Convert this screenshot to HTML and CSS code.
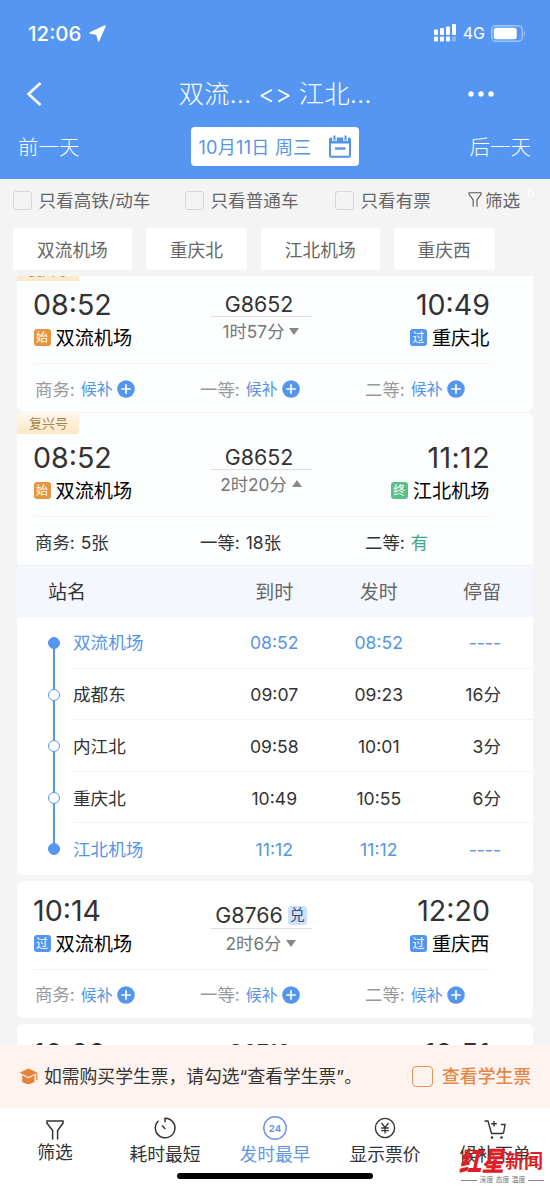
FILE: index.html
```html
<!DOCTYPE html>
<html lang="zh-CN">
<head>
<meta charset="utf-8">
<title>车票查询</title>
<link rel="stylesheet" href="styles.css">
</head>
<body>
<svg class="defs" width="0" height="0">
  <symbol id="funnel" viewBox="0 0 18 20"><path d="M6.600 19.500V10.500L1 3.200V1H17V3.200L11.600 10.500V19.500" fill="none" stroke="currentColor" stroke-width="1.500"/></symbol>
  <symbol id="plus" viewBox="0 0 18 18"><circle cx="9" cy="9" r="8.800" fill="#5495ef"/><path d="M9 4.200V13.800M4.200 9H13.800" stroke="#fff" stroke-width="1.700"/></symbol>
</svg>
<div class="screen">
  <header class="header">
    <div class="status">
      <span class="clock">12:06</span>
      <svg class="loc" viewBox="0 0 17 17"><path d="M16 1L1.200 8L8 9.200L9.600 15.800Z" fill="#fff" stroke="#fff" stroke-width="1.600" stroke-linejoin="round"/></svg>
      <svg class="signal" viewBox="0 0 23 18"><g fill="#fff"><rect x="0" y="5.500" width="4" height="5.500" rx="1"/><rect x="6" y="4" width="4" height="7" rx="1"/><rect x="12" y="2.500" width="4" height="8.500" rx="1"/><rect x="18" y="0" width="4" height="11" rx="1"/><rect x="0" y="12.500" width="4" height="5" rx="1"/><rect x="6" y="12.500" width="4" height="5" rx="1"/><rect x="12" y="12.500" width="4" height="5" rx="1"/><rect x="18" y="12.500" width="4" height="5" rx="1" opacity=".3"/></g></svg>
      <span class="net">4G</span>
      <svg class="battery" viewBox="0 0 36 17"><rect x=".7" y=".7" width="30.600" height="15.600" rx="4" fill="none" stroke="#a3c6fa" stroke-width="1.400"/><rect x="2.700" y="2.700" width="23" height="11.600" rx="2.500" fill="#fff"/><path d="M33 5.500Q35.500 8.500 33 11.500Z" fill="#a3c6fa"/></svg>
    </div>
    <div class="nav">
      <svg class="back" viewBox="0 0 16 24"><path d="M14.500 1L2.500 12L14.500 23" fill="none" stroke="#fff" stroke-width="2.600"/></svg>
      <h1 class="title">双流... &lt;&gt; 江北...</h1>
      <svg class="more" viewBox="0 0 26 6"><g fill="#fff"><circle cx="3" cy="3" r="2.700"/><circle cx="13" cy="3" r="2.700"/><circle cx="23" cy="3" r="2.700"/></g></svg>
    </div>
    <div class="days">
      <span>前一天</span>
      <div class="date"><span>10月11日 周三</span>
        <svg class="cal" viewBox="0 0 22 23"><rect x="1" y="3.500" width="20" height="18.300" rx="1" fill="none" stroke="#5595e8" stroke-width="2"/><path d="M1 3H21V8.500H1Z" fill="#5595e8"/><path d="M5.500 0V6M16.500 0V6" stroke="#fff" stroke-width="4.500"/><path d="M5.500 .5V5.500M16.500 .5V5.500" stroke="#5595e8" stroke-width="2"/><path d="M6 13.500H16.500" stroke="#5595e8" stroke-width="2.400"/></svg>
      </div>
      <span>后一天</span>
    </div>
  </header>

  <div class="filters">
    <label class="opt"><i class="box"></i>只看高铁/动车</label>
    <label class="opt"><i class="box"></i>只看普通车</label>
    <label class="opt"><i class="box"></i>只看有票</label>
    <span class="sift"><svg class="sift-icon"><use href="#funnel"/></svg>筛选<sup class="count">0</sup></span>
  </div>
  <div class="chips"><span class="chip">双流机场</span><span class="chip">重庆北</span><span class="chip">江北机场</span><span class="chip">重庆西</span></div>

  <main class="list">
    <article class="card tagged first">
      <span class="tag">复兴号</span>
      <div class="trip">
        <div class="end"><b class="time">08:52</b><span class="place"><i class="badge start">始</i>双流机场</span></div>
        <div class="mid"><b class="no">G8652</b><span class="dur">1时57分<i class="tri"></i></span></div>
        <div class="end right"><b class="time">10:49</b><span class="place"><i class="badge pass">过</i>重庆北</span></div>
      </div>
      <div class="seats dim">
        <span class="seat">商务:<em>候补</em><svg class="plus"><use href="#plus"/></svg></span>
        <span class="seat">一等:<em>候补</em><svg class="plus"><use href="#plus"/></svg></span>
        <span class="seat">二等:<em>候补</em><svg class="plus"><use href="#plus"/></svg></span>
      </div>
    </article>

    <article class="card tagged open">
      <span class="tag">复兴号</span>
      <div class="trip">
        <div class="end"><b class="time">08:52</b><span class="place"><i class="badge start">始</i>双流机场</span></div>
        <div class="mid"><b class="no">G8652</b><span class="dur">2时20分<i class="tri up"></i></span></div>
        <div class="end right"><b class="time wide">11:12</b><span class="place"><i class="badge last">终</i>江北机场</span></div>
      </div>
      <div class="seats">
        <span class="seat">商务:<span class="left">5张</span></span>
        <span class="seat">一等:<span class="left">18张</span></span>
        <span class="seat">二等:<span class="left has">有</span></span>
      </div>
      <div class="stops">
        <div class="row head"><span class="name">站名</span><span>到时</span><span>发时</span><span class="stay">停留</span></div>
        <div class="row edge"><i class="dot"></i><span class="name">双流机场</span><span>08:52</span><span>08:52</span><span class="stay">----</span></div>
        <div class="row via"><i class="dot"></i><span class="name">成都东</span><span>09:07</span><span>09:23</span><span class="stay">16分</span></div>
        <div class="row via"><i class="dot"></i><span class="name">内江北</span><span>09:58</span><span>10:01</span><span class="stay">3分</span></div>
        <div class="row via"><i class="dot"></i><span class="name">重庆北</span><span>10:49</span><span>10:55</span><span class="stay">6分</span></div>
        <div class="row edge finish"><i class="dot"></i><span class="name">江北机场</span><span>11:12</span><span>11:12</span><span class="stay">----</span></div>
      </div>
    </article>

    <article class="card plain">
      <div class="trip">
        <div class="end"><b class="time">10:14</b><span class="place"><i class="badge pass">过</i>双流机场</span></div>
        <div class="mid"><b class="no">G8766<i class="swap">兑</i></b><span class="dur">2时6分<i class="tri"></i></span></div>
        <div class="end right"><b class="time">12:20</b><span class="place"><i class="badge pass">过</i>重庆西</span></div>
      </div>
      <div class="seats dim">
        <span class="seat">商务:<em>候补</em><svg class="plus"><use href="#plus"/></svg></span>
        <span class="seat">一等:<em>候补</em><svg class="plus"><use href="#plus"/></svg></span>
        <span class="seat">二等:<em>候补</em><svg class="plus"><use href="#plus"/></svg></span>
      </div>
    </article>

    <article class="card next">
      <div class="trip">
        <div class="end"><b class="time">10:22</b></div>
        <div class="mid"><b class="no">G8712</b></div>
        <div class="end right"><b class="time">12:51</b></div>
      </div>
    </article>
  </main>

  <div class="notice">
    <svg class="cap" viewBox="0 0 19 17"><path d="M9.500 .5L18.500 4.800L9.500 9.100L.5 4.800Z" fill="#e58338"/><path d="M3.200 7.300L9.500 10.300L15.500 7.300V14Q9.500 18.300 3.200 14Z" fill="#e58338"/><path d="M17.700 5V12" stroke="#e58338" stroke-width="1.200"/></svg>
    <span class="tip">如需购买学生票，请勾选“查看学生票”。</span>
    <i class="student-box"></i>
    <span class="student">查看学生票</span>
  </div>

  <footer class="tabs">
    <div class="tab"><svg class="ico funnel"><use href="#funnel"/></svg>筛选</div>
    <div class="tab"><svg class="ico" viewBox="0 0 24 24"><path d="M12 6.200V2.200A9.800 9.800 0 1 1 5.600 4.700" fill="none" stroke="#333" stroke-width="1.500"/><path d="M9 9.500L12.300 13" stroke="#333" stroke-width="1.600"/></svg>耗时最短</div>
    <div class="tab on"><svg class="ico" viewBox="0 0 24 24"><circle cx="12" cy="12" r="11.200" fill="none" stroke="#6b94e6" stroke-width="1.400"/><text class="n24" x="12" y="15.500" text-anchor="middle">24</text></svg>发时最早</div>
    <div class="tab"><svg class="ico" viewBox="0 0 24 24"><circle cx="12" cy="12" r="9.600" fill="none" stroke="#333" stroke-width="1.400"/><path d="M8.500 7L12 11.500L15.500 7M12 11.500V17.500M8.200 12H15.800M8.200 14.700H15.800" fill="none" stroke="#333" stroke-width="1.300"/></svg>显示票价</div>
    <div class="tab"><svg class="ico" viewBox="0 0 24 24"><path d="M1.500 5H5L8.500 17.500H19Q20.500 17.500 20.800 16L22 8.500H18M11 5V10.500M8.200 7.800H13.800" fill="none" stroke="#333" stroke-width="1.400"/><circle cx="9" cy="21.500" r="1.300" fill="#333"/><circle cx="18.500" cy="21.500" r="1.300" fill="#333"/></svg>候补下单</div>
    <i class="home"></i>
    <div class="mark">
      <div class="brand"><span class="brush">红星</span><span class="news">新闻</span></div>
      <div class="motto"><span>深度 态度 温度</span></div>
    </div>
  </footer>
</div>
</body>
</html>
```
FILE: styles.css
```css
* { box-sizing: border-box; }
body { margin: 0; background: #f4f4f4; font-family: Inter, "Noto Sans CJK SC", sans-serif; color: #333; }
i, em { font-style: normal; }
b { font-weight: 400; }
svg { flex: none; display: block; }
.defs { position: absolute; }
.screen { width: 550px; height: 1190px; display: flex; flex-direction: column; overflow: hidden; white-space: nowrap; }

/* header */
.header { height: 179px; flex: none; background: #5596f3; color: #fff; }
.status { height: 66px; padding: 0 23px 0 28px; display: flex; align-items: center; }
.clock { font-size: 20.5px; font-weight: 500; }
.loc { width: 17px; height: 17px; margin-left: 7px; }
.signal { width: 23px; height: 18px; margin-left: auto; }
.net { font-size: 16px; margin: 0 6px; }
.battery { width: 36px; height: 17px; }
.nav { height: 56px; display: grid; grid-template-columns: 1fr auto 1fr; align-items: center; padding: 0 56px 0 26px; }
.back { width: 16px; height: 24px; }
.title { margin: 0 -15px 0 15px; font-size: 25.5px; font-weight: 300; line-height: 38px; }
.more { width: 26px; height: 6px; justify-self: end; }
.days { height: 49px; display: flex; align-items: center; justify-content: space-between; padding: 0 19px 0 18px; font-size: 20.5px; font-weight: 300; }
.days > span { padding-bottom: 2px; }
.date { width: 168px; height: 39px; border-radius: 4px; background: #fff; color: #5595e8; font-size: 18px; font-weight: 400; display: flex; align-items: center; justify-content: space-between; padding: 0 8px; }
.date span { padding-bottom: 2px; letter-spacing: .3px; }
.cal { width: 22px; height: 23px; }

/* filters */
.filters { height: 42px; flex: none; display: grid; grid-template-columns: 172px 150px 133px auto; padding: 0 0 2px 13px; align-items: center; font-size: 17.6px; color: #666; }
.opt { display: flex; align-items: center; gap: 6.5px; }
.box { width: 19px; height: 19px; margin-top: 2px; border: 1.5px solid #d8d8d8; border-radius: 3px; }
.sift { display: flex; align-items: center; gap: 3px; }
.sift-icon { width: 14px; height: 15px; color: #555; }
.count { color: #fff; font-size: 11px; align-self: flex-start; margin: -1px 0 0 4px; }
.chips { height: 55px; flex: none; display: flex; gap: 14px; padding: 7px 13px 0; }
.chip { height: 42px; line-height: 45px; padding: 0 24px; background: #fff; border-radius: 3px; font-size: 17.7px; color: #666; }

/* results */
.list { height: 769px; flex: none; overflow: hidden; padding: 0 17px; }
.card { background: #fff; border-radius: 6px; height: 137px; margin-bottom: 6px; overflow: hidden; }
.card.tagged { background: #fcfdff; height: 152px; margin-bottom: 1px; padding-top: 1px; }
.card.first { margin-top: -16px; }
.card.open { height: 462px; margin-bottom: 6px; }
.tag { display: block; width: 62px; height: 20px; margin-bottom: -6px; padding-left: 12px; line-height: 19px; font-size: 13px; color: #a68350; background: linear-gradient(#fff5e8, #fce8c8); }
.trip { height: 89px; padding: 15px 0 0; margin: 0 43px 0 17px; display: grid; grid-template-columns: 1fr 101px 1fr; border-bottom: 1px solid #f3f3f3; }
.end { display: flex; flex-direction: column; }
.right { align-items: flex-end; }
.time { height: 31px; line-height: 30px; font-size: 28.6px; margin: 0 0 0 -1px; }
.time.wide { letter-spacing: .4px; }
.place { height: 32px; display: flex; align-items: center; gap: 5px; font-size: 19.2px; color: #000; }
.end:not(.right) .place { margin-left: -.5px; }
.right .place { margin-right: .5px; }
.badge { width: 17px; height: 17px; margin-top: 1px; border-radius: 3px; color: #fff; font-size: 12px; line-height: 17px; text-align: center; }
.start { background: #e69440; }
.pass { background: #5495ef; }
.last { background: #5bbf88; }
.mid { text-align: center; display: flex; flex-direction: column; margin: 0 1px 0 -1px; }
.no { height: 27px; line-height: 26px; padding: 2px 4px 0 0; font-size: 21.4px; border-bottom: 1px solid #dfdfdf; display: flex; justify-content: center; align-items: center; gap: 5px; }
.plain .mid { padding-top: 6px; }
.plain .no { padding: 0; }
.next .no { padding-top: 0; }
.swap { width: 19px; height: 19px; border-radius: 3px; background: #cfe1f8; color: #35507a; font-size: 15px; line-height: 18px; text-align: center; }
.dur { height: 26px; display: flex; align-items: center; justify-content: center; gap: 5px; font-size: 17.3px; color: #777; }
.tri { margin-top: 3px; border: 5.5px solid transparent; border-top: 7px solid #888; border-bottom: 0; }
.tri.up { margin-top: 0; border-top: 0; border-bottom: 7px solid #888; }
.seats { height: 48px; margin-left: 18px; display: grid; grid-template-columns: repeat(3, 165px); align-items: center; font-size: 17.4px; }
.seats.dim { color: #999; }
.seat { display: flex; align-items: center; }
.seat em { margin-left: 6px; color: #5595e8; font-size: 16px; }
.left { margin-left: 6px; }
.has { color: #3fa67c; }
.plus { width: 18px; height: 18px; margin: 2px 0 0 4px; }
.plain .seats { padding-bottom: 1px; }

/* stop table */
.stops { background: #fff; }
.row { position: relative; height: 51.6px; margin-left: 56px; padding-right: 32px; display: grid; grid-template-columns: 149px 104.5px 104.5px 1fr; align-items: center; text-align: center; font-size: 17.6px; border-bottom: 1px solid #f4f4f4; }
.name { text-align: left; }
.row:not(.head) .name, .via .stay { padding-bottom: 2px; }
.via { padding-top: 2px; }
.stay { text-align: right; }
.row.head { height: 52px; margin: 0; padding: 0 32px 2px 31px; grid-template-columns: 174px 104.5px 104.5px 1fr; background: #f4f8fe; font-size: 19px; color: #666; border: 0; border-top: 1px solid #eef1f7; }
.head .name { color: #333; }
.edge { color: #5595e8; }
.finish { border: 0; }
.dot { position: absolute; left: -25px; top: 20px; width: 12px; height: 12px; border-radius: 50%; border: 1.5px solid #5596f3; background: #fff; z-index: 1; }
.edge .dot { background: #5596f3; }
.row:not(.head):not(.finish)::before { content: ""; position: absolute; left: -20px; top: 26px; width: 2px; height: 52px; background: #5596e8; }

/* student notice */
.notice { height: 63px; flex: none; background: #fef3ee; display: flex; align-items: center; padding: 0 19px; }
.cap { width: 19px; height: 17px; }
.tip { margin-left: 6px; padding-bottom: 3px; font-size: 17.8px; }
.student-box { width: 21px; height: 21px; margin-left: auto; border: 1.5px solid #e39258; border-radius: 4px; }
.student { margin-left: 9px; padding-bottom: 3px; font-size: 17.8px; font-weight: 500; color: #e28745; }

/* tab bar */
.tabs { position: relative; height: 82px; flex: none; background: #fff; display: grid; grid-template-columns: repeat(5, 110px); }
.tab { display: flex; flex-direction: column; align-items: center; padding-top: 8px; font-size: 17.8px; line-height: 26px; }
.ico { width: 24px; height: 24px; margin-bottom: 2px; color: #333; }
.funnel { width: 18px; height: 20px; margin: 4px 0 0; }
.on { color: #5f97e8; }
.n24 { font: 700 9.5px Inter, sans-serif; fill: #6b94e6; }
.home { position: absolute; left: 177px; bottom: 11px; width: 196px; height: 6px; border-radius: 3px; background: #000; }
.mark { position: absolute; left: 461px; top: 38px; width: 83px; }
.brand { height: 30px; display: flex; align-items: center; color: #dc1f26; font-weight: 900; }
.brush { width: 44px; font-size: 22.5px; line-height: 30px; transform: skewX(-12deg) scaleY(1.2); }
.news { font-size: 19px; line-height: 29px; font-weight: 700; }
.motto { display: flex; align-items: center; gap: 3px; font-size: 7px; line-height: 8px; color: #777; }
.motto::before, .motto::after { content: ""; flex: 1; height: 1px; background: #888; }
```
